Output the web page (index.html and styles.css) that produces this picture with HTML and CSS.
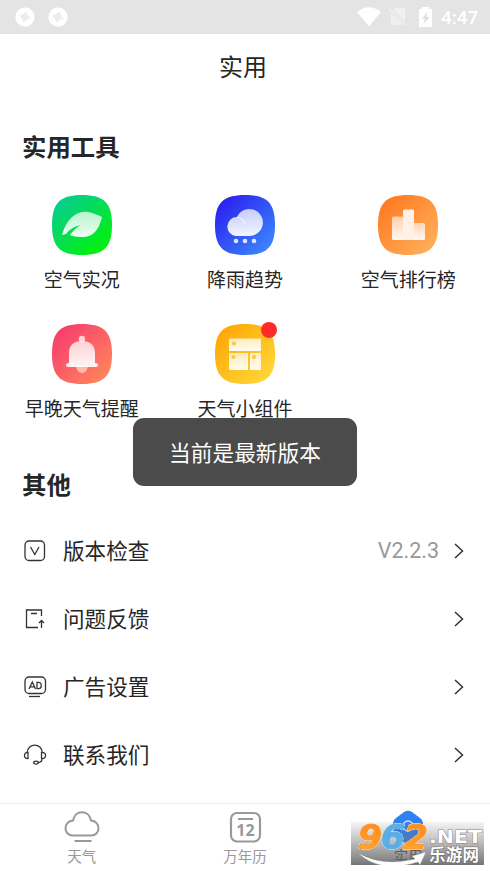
FILE: index.html
```html
<!DOCTYPE html>
<html lang="zh-CN">
<head>
<meta charset="utf-8">
<title>实用</title>
<link rel="stylesheet" href="styles.css">
</head>
<body>
<svg class="defs" width="0" height="0" aria-hidden="true">
  <defs>
    <path id="tile" d="M30 0C52 0 60 8 60 30C60 52 52 60 30 60C8 60 0 52 0 30C0 8 8 0 30 0Z"/>
    <linearGradient id="green" x1="0" y1="0" x2=".8" y2="1"><stop offset="0" stop-color="#08c8a0"/><stop offset=".9" stop-color="#02ee16"/></linearGradient>
    <linearGradient id="blue" x1="0" y1="0" x2="1" y2="1"><stop offset=".1" stop-color="#2b20ee"/><stop offset="1" stop-color="#3e92ff"/></linearGradient>
    <linearGradient id="orange" x1="0" y1="0" x2="1" y2="1"><stop offset=".1" stop-color="#ff7a22"/><stop offset="1" stop-color="#ffb560"/></linearGradient>
    <linearGradient id="red" x1="0" y1="0" x2="1" y2="1"><stop offset=".1" stop-color="#f83d70"/><stop offset="1" stop-color="#ff8d58"/></linearGradient>
    <linearGradient id="yellow" x1="0" y1="0" x2="1" y2="1"><stop offset=".1" stop-color="#fea806"/><stop offset="1" stop-color="#ffdc3c"/></linearGradient>
    <linearGradient id="glass" x1="0" y1="0" x2="0" y2="1"><stop offset="0" stop-color="#fff" stop-opacity=".72"/><stop offset="1" stop-color="#fff" stop-opacity=".93"/></linearGradient>
    <linearGradient id="fade" x1="0" y1="0" x2="0" y2="1"><stop offset="0" stop-color="#fff" stop-opacity=".6"/><stop offset="1" stop-color="#fff" stop-opacity=".92"/></linearGradient>
    <g id="swirl"><circle cx="10" cy="10" r="9.500" fill="#fff" opacity=".35"/><g fill="#fff"><path id="petal" d="M1.500 6C4 .5 9-.5 14 1.200C15 2.500 12.500 3 11 4.500C9 6.500 6.500 8.500 3.500 8.500C1.500 8.500 1 7.500 1.500 6Z"/><use href="#petal" transform="rotate(90 10 10)"/><use href="#petal" transform="rotate(180 10 10)"/><use href="#petal" transform="rotate(270 10 10)"/></g></g>
    <path id="chevron" d="M1 1L8.500 8L1 15" fill="none" stroke="#333" stroke-width="1.500"/>
  </defs>
</svg>

<header class="status">
  <div class="status-left">
    <svg width="20" height="20"><use href="#swirl"/></svg>
    <svg width="20" height="20"><use href="#swirl"/></svg>
  </div>
  <div class="status-right">
    <svg class="wifi" width="24" height="20"><path d="M0 5Q12-4.500 24 5L12 19.500Z" fill="#fff"/></svg>
    <svg class="sim" width="18" height="20"><path d="M6.500 1H16V14.500L4.500 3ZM2 6L14 18H2Z" fill="#f0f0f0"/><path d="M0 1.500L17 18.500" stroke="#f0f0f0" stroke-width="1.500"/></svg>
    <svg class="battery" width="13" height="20"><path d="M3 0H10V2H13V20H0V2H3Z" fill="#fff"/><path d="M8.500 5L3 11.500H6L4.500 17L10.500 10H7.200Z" fill="#dedede"/></svg>
    <span class="clock">4:47</span>
  </div>
</header>

<h1 class="title">实用</h1>

<main>
  <h2>实用工具</h2>
  <section class="tools">
    <div class="tool">
      <svg viewBox="0 0 60 60"><use href="#tile" fill="url(#green)"/><path d="M10 40C14 25 24 15 36 17C42 18 46 20 50 22C48 31 43 43 29 42C24 42 20 41 18 40Q23 33 29 30Q19 32 14 39Z" fill="url(#glass)"/></svg>
      <span>空气实况</span>
    </div>
    <div class="tool">
      <svg viewBox="0 0 60 60"><use href="#tile" fill="url(#blue)"/><path d="M20.500 41A9.500 9.500 0 0 1 22 22.100A13.500 13.500 0 1 1 34.500 41Z" fill="url(#glass)"/><path d="M22 22.100Q28 23 30 29" fill="none" stroke="#fff" stroke-width=".8"/><g fill="#dbe7ff"><circle cx="21" cy="46" r="2.300"/><circle cx="30" cy="46" r="2.300"/><circle cx="39" cy="46" r="2.300"/></g></svg>
      <span>降雨趋势</span>
    </div>
    <div class="tool">
      <svg viewBox="0 0 60 60"><use href="#tile" fill="url(#orange)"/><path d="M14 23Q14 21.500 15.500 21.500H25V45H15.500Q14 45 14 43.500Z" fill="url(#fade)"/><path d="M35 28H45.500Q47 28 47 29.500V43.500Q47 45 45.500 45H35Z" fill="url(#fade)"/><path d="M25 16Q25 14.500 26.500 14.500H34.500Q36 14.500 36 16V45H25Z" fill="#fff1e7"/></svg>
      <span>空气排行榜</span>
    </div>
    <div class="tool">
      <svg viewBox="0 0 60 60"><use href="#tile" fill="url(#red)"/><path d="M24 42H36Q35 49 30 49Q25 49 24 42Z" fill="#ffbaa9"/><circle cx="30" cy="15" r="3.200" fill="#ffd0cd"/><path d="M17 39V29C17 21 22 17 30 17S43 21 43 29V39Q46 39 46 41T44 43H16Q14 43 14 41T17 39Z" fill="url(#glass)"/></svg>
      <span>早晚天气提醒</span>
    </div>
    <div class="tool badged">
      <svg viewBox="0 0 60 60"><use href="#tile" fill="url(#yellow)"/><g fill="url(#glass)"><path d="M15.500 14.500H44.500Q46 14.500 46 16V27H14V16Q14 14.500 15.500 14.500Z"/><path d="M14 29H33V46H15.500Q14 46 14 44.500Z"/><path d="M35 29H46V44.500Q46 46 44.500 46H35Z"/></g><g fill="#ffc42e"><circle cx="19" cy="19.500" r="2"/><circle cx="18.500" cy="33" r="2"/><circle cx="39" cy="33" r="2"/></g></svg>
      <span>天气小组件</span>
    </div>
  </section>

  <h2 class="other">其他</h2>
  <section class="list">
    <div class="row">
      <svg class="lead" viewBox="0 0 24 24"><rect x="2" y="2" width="19.500" height="19.500" rx="4"/><path d="M7.500 8L11.800 15.500L16 8"/></svg>
      <span>版本检查</span><em>V2.2.3</em>
      <svg class="go" width="10" height="16"><use href="#chevron"/></svg>
    </div>
    <div class="row">
      <svg class="lead" viewBox="0 0 24 24"><path d="M18.500 9V3H3.500V20.500H15M8 6.500H14M18.500 21V13.500M16 16L18.500 13.500L21 16"/></svg>
      <span>问题反馈</span>
      <svg class="go" width="10" height="16"><use href="#chevron"/></svg>
    </div>
    <div class="row">
      <svg class="lead" viewBox="0 0 24 24"><rect x="2" y="2" width="20.500" height="16.500" rx="4"/><path d="M6 21.500H17"/><path d="M6 14L9.300 7L12.500 14M7 11.800H11.500M14 7.300V13.700H15.500Q18.300 13.700 18.300 10.500T15.500 7.300Z"/></svg>
      <span>广告设置</span>
      <svg class="go" width="10" height="16"><use href="#chevron"/></svg>
    </div>
    <div class="row">
      <svg class="lead" viewBox="0 0 24 24"><path d="M4 10C5 -.500 18.500 -.500 19.500 10M5 9.500V15.500C.300 16 .300 9 5 9.500ZM18.500 9.500V15.500C24 16 24 9 18.500 9.500ZM19 15.500Q19 19.500 15 19.500"/><ellipse cx="13" cy="19.600" rx="2.300" ry="1.500"/></svg>
      <span>联系我们</span>
      <svg class="go" width="10" height="16"><use href="#chevron"/></svg>
    </div>
  </section>
</main>

<nav class="tabs">
  <div class="tab">
    <svg width="36" height="34" viewBox="0 0 36 34"><path d="M9 25.500C-1 25.500-1 11 9 10.500C11-.500 25-.500 27 10.500C37 11 37 25.500 27 25.500ZM10.500 31H27.500" fill="none" stroke="#999" stroke-width="2"/></svg>
    <span>天气</span>
  </div>
  <div class="tab">
    <svg width="36" height="34" viewBox="0 0 36 34"><rect x="4" y="3" width="29" height="28.500" rx="6" fill="none" stroke="#999" stroke-width="2.200"/><path d="M11 9H26" stroke="#999" stroke-width="2"/><text x="18.500" y="26" text-anchor="middle" class="day">12</text></svg>
    <span>万年历</span>
  </div>
  <div class="tab active">
    <svg width="36" height="34" viewBox="0 0 36 34"><path d="M14 2Q18-.500 22 2L30 8Q33 10 33 13V25Q33 27 31 28L22 32Q18 34 14 32L5 28Q3 27 3 25V13Q3 10 6 8Z" fill="#2f80f3"/><circle cx="18" cy="16" r="5" fill="none" stroke="#cfe2ff" stroke-width="1.500"/></svg>
    <span>实用</span>
  </div>
</nav>

<div class="toast">当前是最新版本</div>

<svg class="mark" width="139" height="50" viewBox="0 0 139 50">
  <defs>
    <linearGradient id="shade" x1="0" y1="0" x2="0" y2="1"><stop offset="0" stop-color="#777" stop-opacity=".08"/><stop offset="1" stop-color="#666" stop-opacity=".9"/></linearGradient>
    <linearGradient id="amber" x1="0" y1="0" x2="0" y2="1"><stop offset="0" stop-color="#ff8526"/><stop offset="1" stop-color="#ffab2d"/></linearGradient>
  </defs>
  <rect x="0" y="7" width="133" height="43" fill="url(#shade)"/>
  <g class="digits">
    <text x="7" y="34" textLength="24" lengthAdjust="spacingAndGlyphs" fill="url(#amber)" stroke="#ff9629">9</text>
    <text x="30" y="34" textLength="24" lengthAdjust="spacingAndGlyphs" fill="#5aaee3" stroke="#5aaee3">6</text>
    <text x="53" y="34" textLength="24" lengthAdjust="spacingAndGlyphs" fill="url(#amber)" stroke="#ff9629">2</text>
  </g>
  <path d="M7 38Q31 52 64 44L61 41L75 37L69 50L67 47Q29 59 7 38Z" fill="#fff" stroke="#888" stroke-width=".4"/>
  <text class="net" x="78" y="28" textLength="53" lengthAdjust="spacingAndGlyphs">.NET</text>
  <text class="site" x="78" y="46" textLength="50">乐游网</text>
</svg>
</body>
</html>
```
FILE: styles.css
```css
* { box-sizing: border-box; }

body {
  margin: 0;
  width: 490px;
  height: 871px;
  overflow: hidden;
  position: relative;
  background: #fff;
  color: #262626;
  font-family: "Noto Sans CJK SC", sans-serif;
  display: flex;
  flex-direction: column;
}

svg { display: block; flex: none; }
.defs { position: absolute; }

.status {
  height: 34px;
  flex: none;
  background: #e4e4e4;
  display: flex;
  justify-content: space-between;
  padding: 7px 11px 0 15px;
}
.status-left { display: flex; gap: 13px; }
.status-right { display: flex; }
.sim { margin-left: 8px; }
.battery { margin-left: 12px; }
.clock {
  margin-left: 9px;
  width: 38px;
  color: #fff;
  font: 500 19px/22px Roboto, sans-serif;
}

.title {
  margin: 0;
  height: 65px;
  padding-right: 4px;
  text-align: center;
  font-size: 24px;
  font-weight: 400;
  line-height: 64px;
}

h2 {
  margin: 29px 0 0 22px;
  font-size: 24.400px;
  font-weight: 700;
  line-height: 36px;
}

.tools {
  margin-top: 31px;
  display: grid;
  grid-template-columns: repeat(3, 1fr);
  grid-auto-rows: 129px;
}
.tool {
  display: flex;
  flex-direction: column;
  align-items: center;
  font-size: 19px;
  line-height: 28px;
  gap: 10px;
  position: relative;
}
.tool svg { width: 60px; height: 60px; }
.badged::after {
  content: "";
  position: absolute;
  left: 97.500px;
  top: -2px;
  width: 16px;
  height: 16px;
  border-radius: 50%;
  background: #ff2a2a;
}

.other { margin-top: 13px; }

.list { margin-top: 15px; }
.row {
  height: 68px;
  display: flex;
  align-items: center;
  padding: 0 26px 0 23px;
  font-size: 21.600px;
}
.row span {
  margin-left: 16px;
  padding-bottom: 3px;
}
.row em {
  margin-left: auto;
  color: #999;
  font: 400 21.500px/26px Roboto, sans-serif;
}
.row .go { margin-left: auto; }
.row em + .go { margin-left: 15px; }
.lead {
  width: 24px;
  height: 24px;
  fill: none;
  stroke: #333;
  stroke-width: 1.300;
}

.tabs {
  margin-top: auto;
  height: 68px;
  flex: none;
  border-top: 1px solid #ededed;
  display: grid;
  grid-template-columns: repeat(3, 1fr);
}
.tab {
  display: flex;
  flex-direction: column;
  align-items: center;
  padding-top: 6px;
  font-size: 14.500px;
  line-height: 22px;
  gap: 1px;
  color: #999;
}
.active { color: #444; }
.day {
  fill: #999;
  font: 700 16px "Noto Sans", sans-serif;
}

.toast {
  position: absolute;
  left: 133px;
  top: 418px;
  width: 224px;
  height: 68px;
  border-radius: 11px;
  background: #4b4b4b;
  color: #fff;
  text-align: center;
  font-size: 21.700px;
  line-height: 68px;
}

.mark {
  position: absolute;
  left: 351px;
  top: 815px;
}
.digits {
  font: italic 700 33px "DejaVu Sans", sans-serif;
  stroke-width: 1.200px;
  stroke-linejoin: round;
  filter: drop-shadow(0 0 .6px #fff) drop-shadow(0 0 .6px #fff);
}
.net {
  font: 700 18px "DejaVu Sans", sans-serif;
  fill: #fff;
  stroke: #888;
  stroke-width: 1px;
  paint-order: stroke;
}
.site {
  font-size: 16.500px;
  font-weight: 700;
  fill: #fff;
  stroke: #666;
  stroke-width: 1px;
  paint-order: stroke;
}
```
